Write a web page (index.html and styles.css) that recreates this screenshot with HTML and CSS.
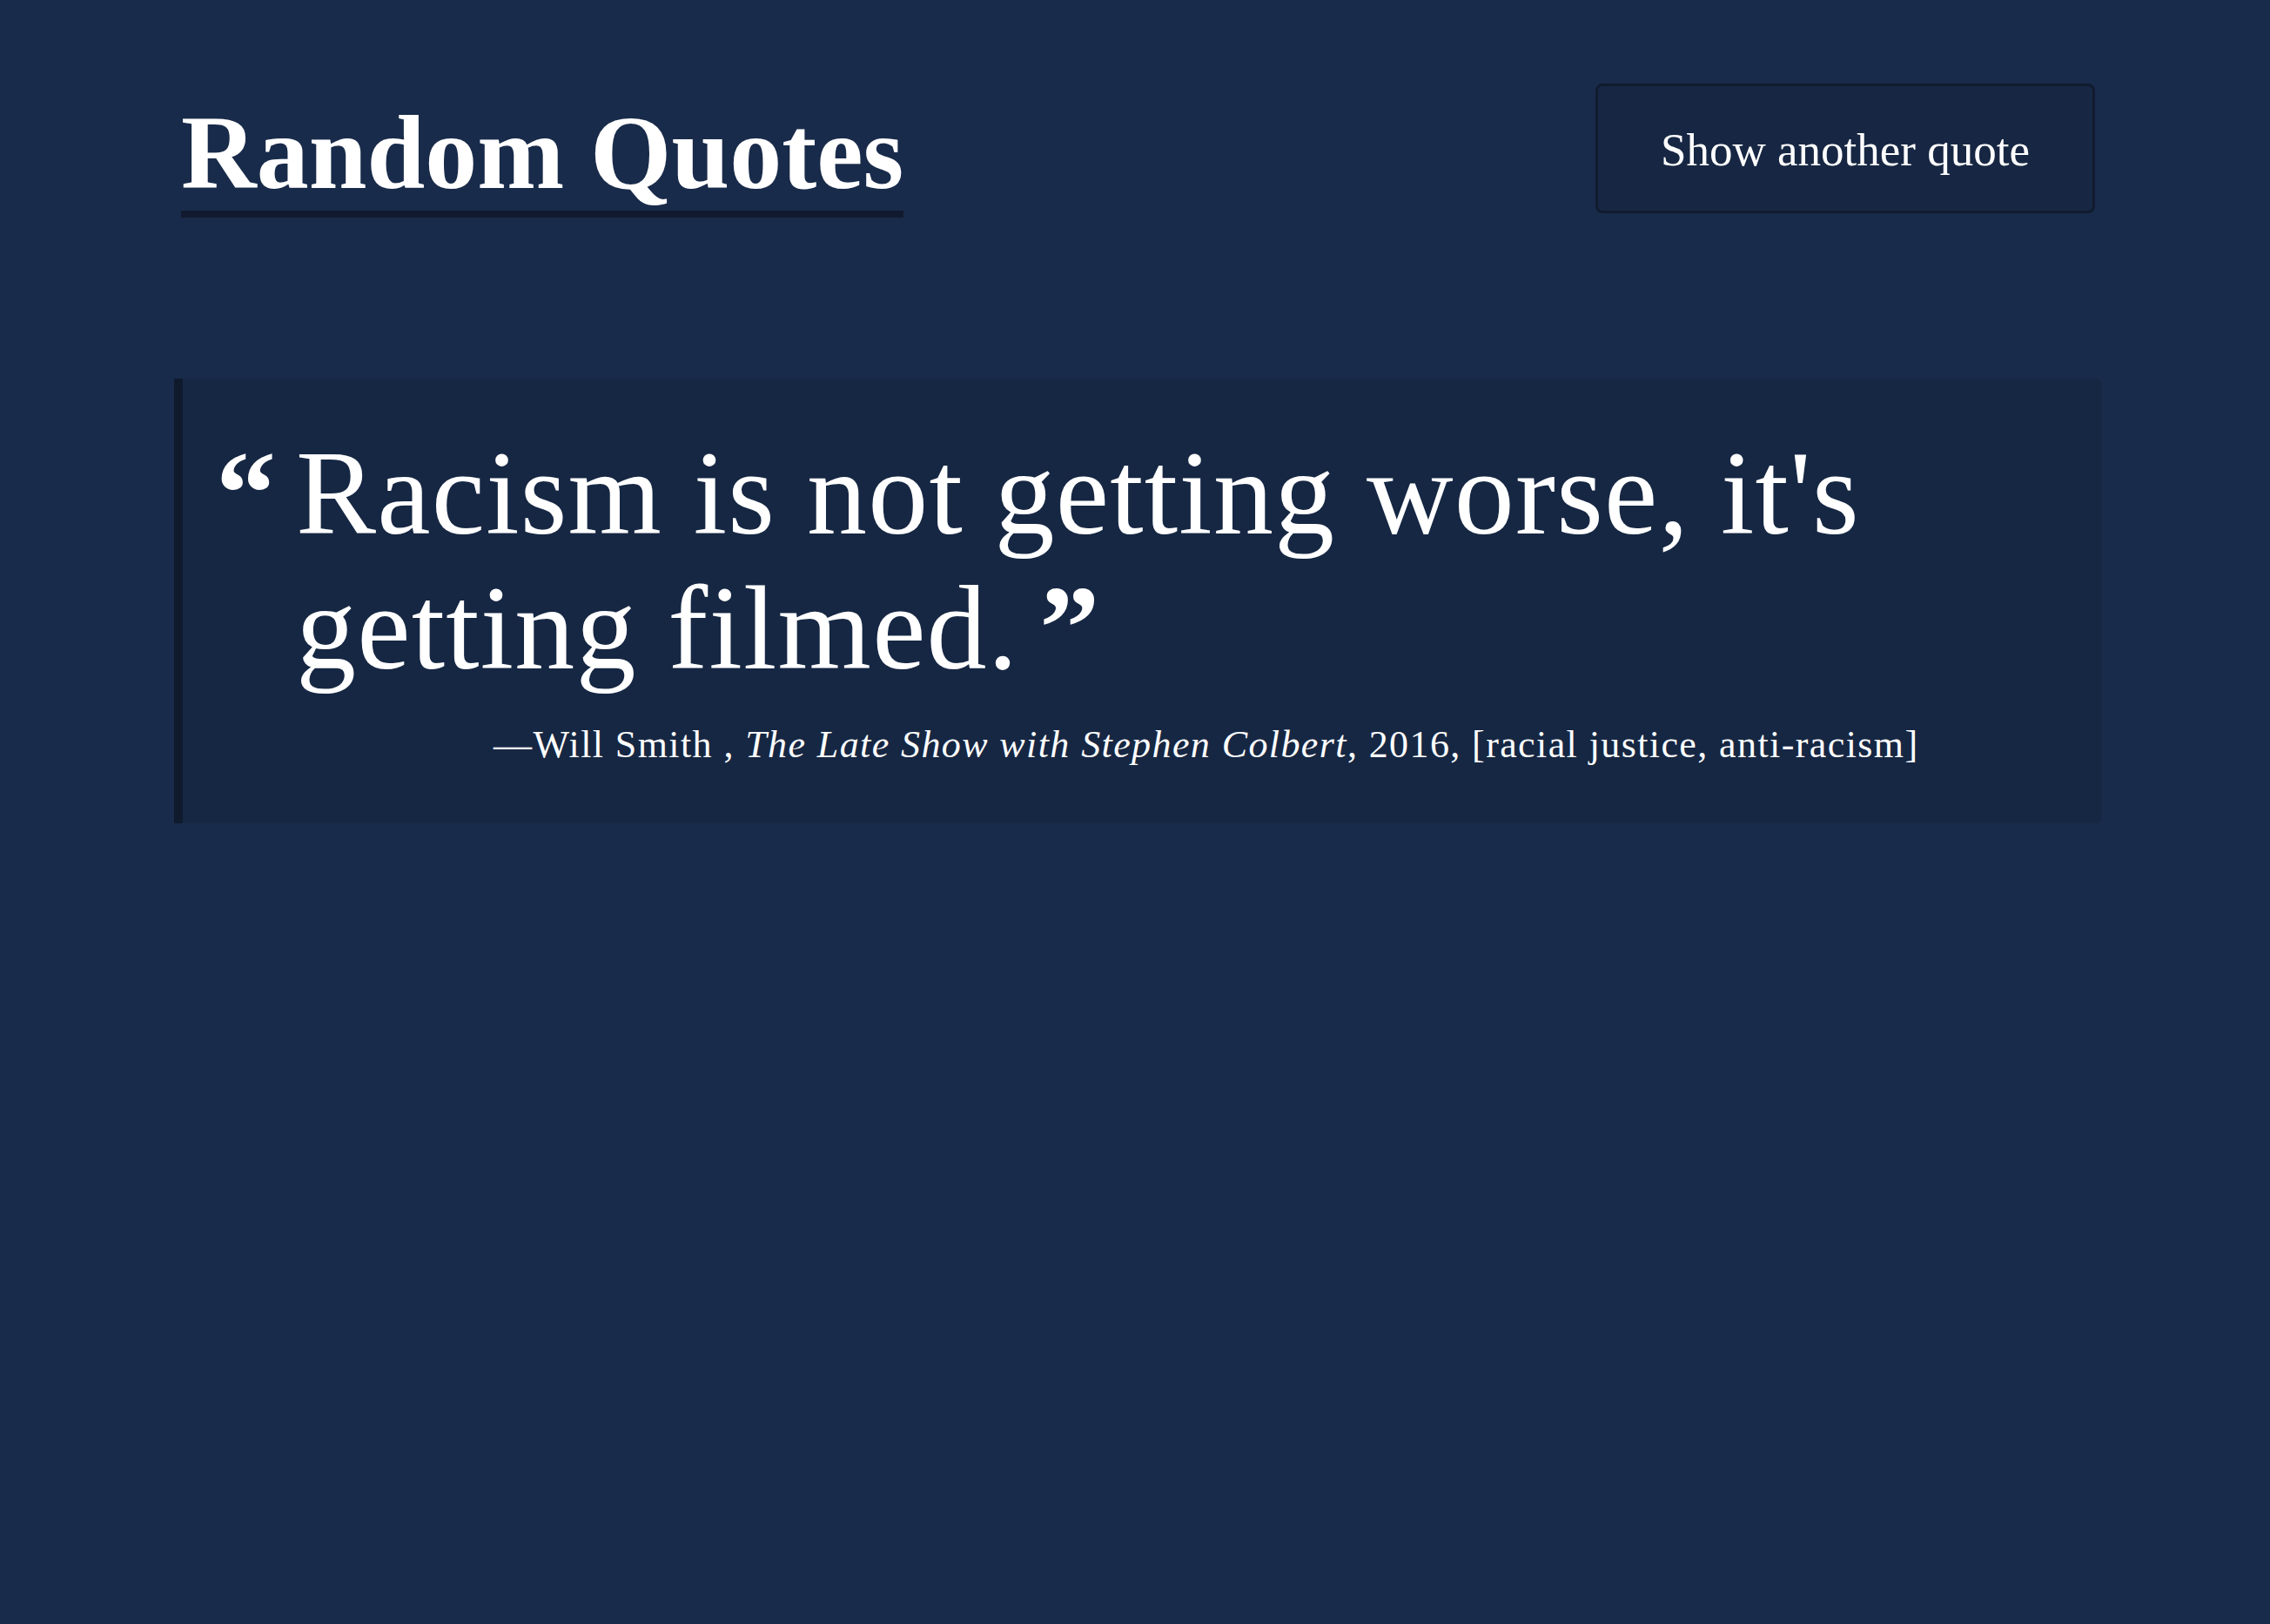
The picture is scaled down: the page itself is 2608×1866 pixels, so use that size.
FILE: index.html
```html
<!DOCTYPE html>
<html lang="en">
<head>
<meta charset="utf-8">
<title>Random Quotes</title>
<link rel="stylesheet" href="styles.css">
</head>
<body>
<main class="page">
  <header class="header">
    <h1 class="title">Random Quotes</h1>
    <button class="btn" type="button">Show another quote</button>
  </header>
  <blockquote class="quote-card">
    <div class="quote-body">
      <span class="mark">“</span>
      <p class="quote-text">Racism is not getting worse, it's getting filmed. <span class="mark close">”</span></p>
    </div>
    <p class="attribution">—Will Smith , <cite>The Late Show with Stephen Colbert</cite>, 2016, [racial justice, anti-racism]</p>
  </blockquote>
</main>
</body>
</html>
```
FILE: styles.css
```css
html, body {
  margin: 0;
  padding: 0;
}

body {
  background: #192b4a;
  color: #ffffff;
  font-family: "Liberation Serif", "Times New Roman", serif;
  min-height: 1866px;
}

.page {
  width: 2215px;
  margin-left: 200px;
}

.header {
  display: flex;
  justify-content: space-between;
  align-items: flex-start;
  padding: 96px 8px 0 8px;
}

.title {
  margin: 14px 0 0 0;
  font-size: 120px;
  font-weight: 700;
  line-height: 132px;
  border-bottom: 8px solid #111a2e;
}

.btn {
  height: 149px;
  padding: 4px 72px 0 72px;
  background: #172743;
  color: #ffffff;
  border: 3px solid #111b2f;
  border-radius: 8px;
  font-family: "Liberation Serif", "Times New Roman", serif;
  font-size: 53px;
  line-height: 1;
  cursor: pointer;
}

.quote-card {
  margin: 185px 0 0 0;
  background: #162743;
  border-left: 10px solid #0f1a2d;
  border-radius: 0 8px 8px 0;
  padding: 54px 50px 65px 38px;
}

.quote-body {
  display: flex;
  align-items: flex-start;
}

.mark {
  font-weight: 700;
}

.quote-body > .mark {
  font-size: 138px;
  line-height: 155px;
  margin-right: 23px;
  flex: none;
}

.mark.close {
  margin-left: -12px;
}

.quote-text {
  margin: 0;
  font-size: 138px;
  line-height: 155px;
  letter-spacing: 1.2px;
}

.attribution {
  margin: 31px 0 0 319px;
  font-size: 44px;
  line-height: 51px;
  letter-spacing: 1.4px;
}

.attribution cite {
  font-style: italic;
}
```
